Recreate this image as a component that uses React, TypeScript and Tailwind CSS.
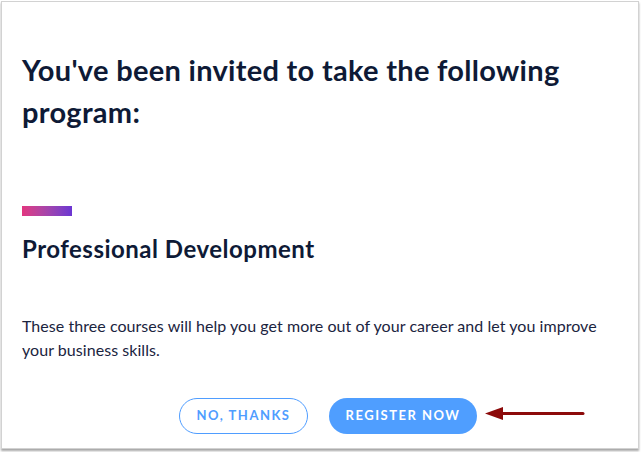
export default function App() {
  return (
    <div className="w-[641px] h-[452px] bg-white relative" style={{ fontFamily: "Lato, 'Noto Sans', sans-serif" }}>
      <div className="absolute left-[1px] top-[1px] w-[638px] h-[448px] border border-[#d2d2d2] shadow-[0_2px_2px_rgba(0,0,0,0.35)] bg-white">
        <div className="flex flex-col pl-[20px] pr-[20px] pt-[47px]">
          <h1 className="text-[29px] leading-[42px] font-bold tracking-[0.3px] text-[#0e1a36]">
            You've been invited to take the following program:
          </h1>
          <div className="mt-[73px] w-[50px] h-[10px] bg-gradient-to-r from-[#e2357f] to-[#6b35d2]" />
          <h2 className="mt-[18px] text-[24px] leading-[30px] font-bold tracking-[0.5px] text-[#0e1a36]">
            Professional Development
          </h2>
          <p className="mt-[50px] text-[16px] leading-[24px] tracking-[0.05px] text-[#1b2440]">
            These three courses will help you get more out of your career and let you improve your business skills.
          </p>
          <div className="mt-[36px] flex justify-center gap-[21px] pl-[16px]">
            <button className="w-[129px] h-[36px] rounded-full border border-[#4f9dff] text-[#4f9dff] text-[13px] font-bold tracking-[1.5px]">
              NO, THANKS
            </button>
            <button className="w-[148px] h-[36px] rounded-full bg-[#4f9eff] text-white text-[13px] font-bold tracking-[1.5px]">
              REGISTER NOW
            </button>
          </div>
        </div>
      </div>
      <svg className="absolute left-[484px] top-[405px]" width="102" height="18" viewBox="0 0 102 18">
        <line x1="16" y1="8.5" x2="99" y2="8.5" stroke="#8c0a0a" strokeWidth="3" strokeLinecap="round" />
        <polygon points="1,8.5 19,2 19,15" fill="#8c0a0a" />
      </svg>
    </div>
  );
}
